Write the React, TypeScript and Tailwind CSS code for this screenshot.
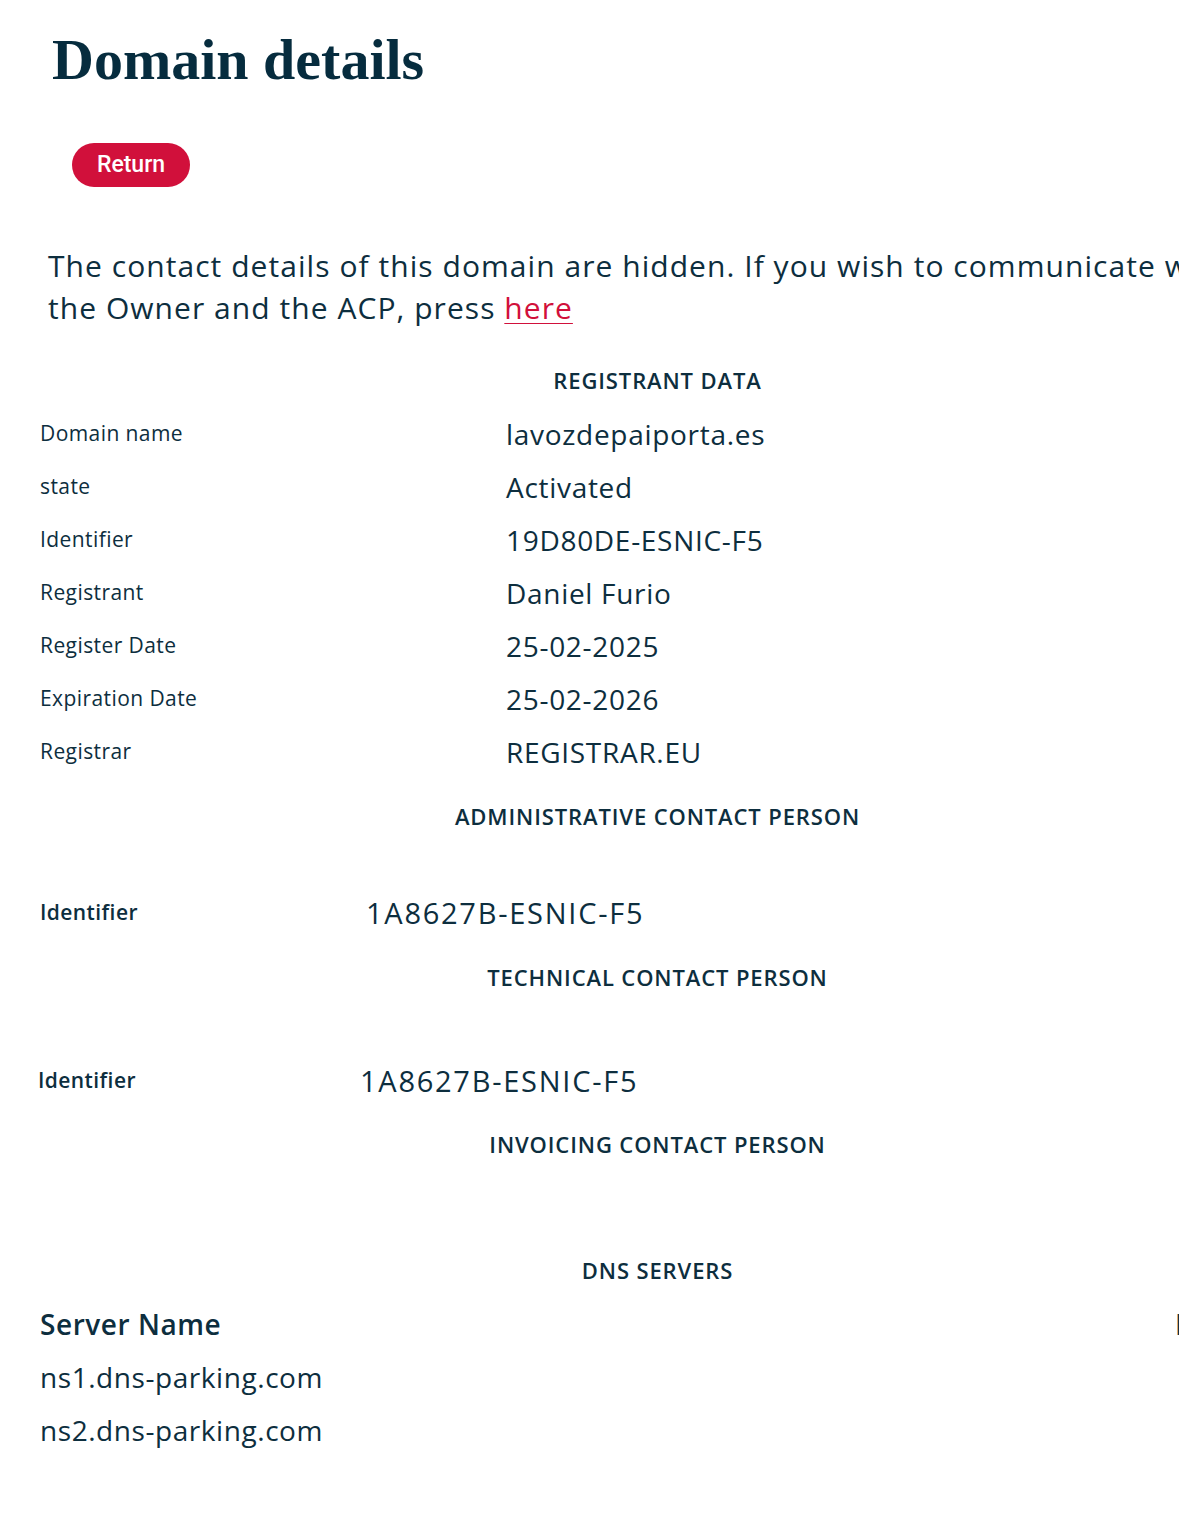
import React from 'react'

const ink = 'text-[#0d2e3e]'

const registrantRows: { label: string; value: string }[] = [
  { label: 'Domain name', value: 'lavozdepaiporta.es' },
  { label: 'state', value: 'Activated' },
  { label: 'Identifier', value: '19D80DE-ESNIC-F5' },
  { label: 'Registrant', value: 'Daniel Furio' },
  { label: 'Register Date', value: '25-02-2025' },
  { label: 'Expiration Date', value: '25-02-2026' },
  { label: 'Registrar', value: 'REGISTRAR.EU' },
]

const dnsServers = ['ns1.dns-parking.com', 'ns2.dns-parking.com']

function SectionTitle({ children, className = '' }: { children: React.ReactNode; className?: string }) {
  return (
    <div className={`flex h-[53px] items-center justify-center text-[22px] font-semibold uppercase tracking-[0.04em] ${className}`}>
      {children}
    </div>
  )
}

function ContactRow({ id, cols, className = '' }: { id: string; cols: string; className?: string }) {
  return (
    <div className={`grid h-[53px] items-center ${cols} ${className}`}>
      <span className="text-[21px] font-semibold tracking-[0.02em]">Identifier</span>
      <span className="text-[29px] tracking-[0.06em]">{id}</span>
    </div>
  )
}

export default function App() {
  return (
    <div className="w-[1179px] overflow-hidden bg-white" style={{ fontFamily: '"Open Sans", sans-serif' }}>
      <div className={`w-[1275px] pb-[80px] ${ink}`}>
        {/* Header */}
        <div className="pl-[52px] pt-[25px]">
          <h1
            className="h-[70px] text-[58px] font-bold leading-[70px] text-[#062c3e]"
            style={{ fontFamily: '"Liberation Serif", serif' }}
          >
            Domain details
          </h1>
          <button
            className="ml-[20px] mt-[48px] h-[44px] w-[118px] rounded-full bg-[#d1103b] text-[23px] font-medium text-white"
            style={{ fontFamily: 'Roboto, sans-serif' }}
          >
            Return
          </button>
        </div>

        <p className="mt-[58px] whitespace-nowrap pl-[48px] text-[30px] leading-[42px] tracking-[0.035em]">
          The contact details of this domain are hidden. If you wish to communicate with
          <br />
          the Owner and the ACP, press{' '}
          <a href="#" className="text-[#d1103b] underline decoration-1 underline-offset-4">
            here
          </a>
        </p>

        <div className="mt-[25px] pl-[40px]">
          {/* Registrant data */}
          <SectionTitle>Registrant data</SectionTitle>
          {registrantRows.map(row => (
            <div key={row.label} className="grid h-[53px] grid-cols-[466px_1fr] items-center">
              <span className="text-[21px] tracking-[0.02em]">{row.label}</span>
              <span className="text-[28px] tracking-[0.025em]">{row.value}</span>
            </div>
          ))}

          <SectionTitle className="mt-[12px]">Administrative contact person</SectionTitle>
          <ContactRow id="1A8627B-ESNIC-F5" cols="grid-cols-[326px_1fr]" className="mt-[43px]" />

          <SectionTitle className="mt-[12px]">Technical contact person</SectionTitle>
          <ContactRow id="1A8627B-ESNIC-F5" cols="-ml-[2px] grid-cols-[322px_1fr]" className="mt-[50px]" />

          <SectionTitle className="mt-[11px]">Invoicing contact person</SectionTitle>

          {/* DNS */}
          <SectionTitle className="mt-[73px]">DNS servers</SectionTitle>
          <div className="grid h-[53px] grid-cols-[1135px_1fr] items-center text-[28px] font-semibold tracking-[0.02em]">
            <span>Server Name</span>
            <span>IP</span>
          </div>
          {dnsServers.map(s => (
            <div key={s} className="flex h-[53px] items-center text-[28px] tracking-[0.02em]">
              {s}
            </div>
          ))}
        </div>
      </div>
    </div>
  )
}
